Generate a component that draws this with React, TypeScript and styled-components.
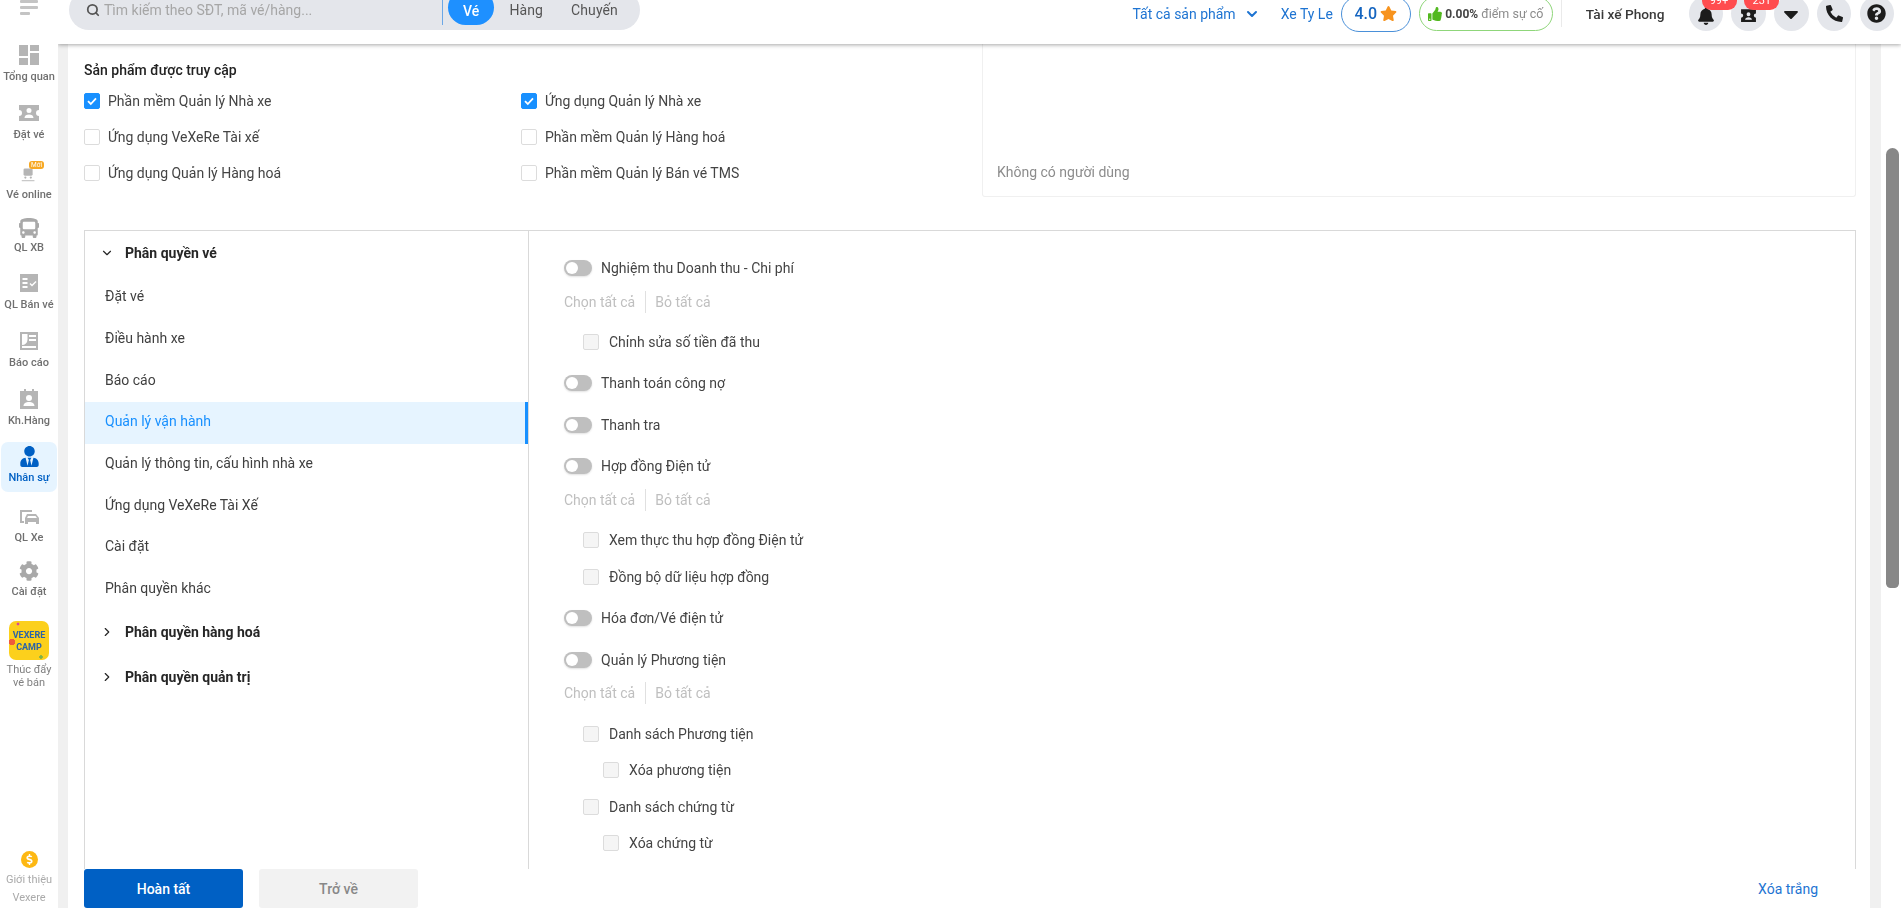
import React from "react";
import styled, { createGlobalStyle } from "styled-components";
import { FaBell, FaCaretDown, FaPhoneAlt, FaQuestionCircle, FaStar, FaThumbsUp, FaCog, FaBus, FaUserTie, FaDollarSign } from "react-icons/fa";
import { FiChevronDown, FiChevronRight, FiSearch } from "react-icons/fi";

const Global = createGlobalStyle`
  html, body { margin: 0; padding: 0; height: 100%; overflow: hidden; background: #fff; }
  body { font-family: Roboto, "Noto Sans", Arial, sans-serif; font-size: 14px; color: #3a3a3a; }
  * { box-sizing: border-box; }
`;

const Page = styled.div`
  width: 1901px; height: 908px; display: grid;
  grid-template-columns: 58px 1fr; grid-template-rows: 44px 1fr; overflow: hidden; filter: blur(0.35px);
`;

/* ---- sidebar ---- */
const Sidebar = styled.aside`
  grid-row: 1 / 3; grid-column: 1; background: #fff; z-index: 3; display: flex; flex-direction: column; align-items: center; overflow: hidden;
`;
const Burger = styled.div`
  height: 41px; width: 100%; padding-left: 20px; flex-shrink: 0; display: flex; flex-direction: column; gap: 3.5px;
  span { display: block; height: 2.5px; background: #c4c4c4; border-radius: 1px; }
  span:nth-child(1) { width: 18px; }
  span:nth-child(2) { width: 18px; }
  span:nth-child(3) { width: 10px; }
`;
const Nav = styled.div<{ $active?: boolean; $h: number; $after?: number }>`
  width: 56px; height: ${(p) => p.$h}px; margin-bottom: ${(p) => p.$after ?? 0}px; border-radius: 7px; display: flex; flex-direction: column; align-items: center; justify-content: flex-start; padding-top: 1px; flex-shrink: 0;
  background: ${(p) => (p.$active ? "#e6f4ff" : "transparent")};
  color: ${(p) => (p.$active ? "#0060c4" : "#707070")};
  font-size: 11px; font-weight: 500; line-height: 14px; white-space: nowrap; text-align: center;
  svg { display: block; flex-shrink: 0; }
`;
const NavIcon = styled.div<{ $mb?: number }>`
  height: 26px; display: flex; align-items: center; justify-content: center; position: relative; margin-bottom: ${(p) => p.$mb ?? 2}px;
`;
const NewTag = styled.span`
  position: absolute; top: 1px; left: 10px; width: 15px; height: 8px; border-radius: 3px; background: #f7a823; color: #fff; font-size: 6.5px; line-height: 8px; font-weight: 400; text-align: center;
`;
const CampLogo = styled.div`
  width: 40px; height: 39px; border-radius: 7px; color: #2b63a8; font-size: 9px; font-weight: 700; line-height: 12px; display: flex; flex-direction: column; align-items: center; justify-content: center; margin-bottom: 4px;
  background:
    radial-gradient(circle at 3px 21px, #ef5a3c 0 3px, transparent 3.5px),
    radial-gradient(circle at 9px 3px, #d8479a 0 1.2px, transparent 1.7px),
    radial-gradient(circle at 32px 36px, #7fb24a 0 1.5px, transparent 2px),
    #fcd01c;
`;
const CampLabel = styled.span`
  color: #808080; font-weight: 400; line-height: 12.5px;
`;
const Promo = styled.div`
  margin-top: auto; margin-bottom: 1px; color: #aaa; font-size: 11px; line-height: 18px; text-align: center; display: flex; flex-direction: column; align-items: center;
`;
const Coin = styled.div`
  width: 17px; height: 17px; border-radius: 50%; background: #fdb813; color: #fff; display: flex; align-items: center; justify-content: center; margin-bottom: 3px;
`;

/* ---- header ---- */
const Header = styled.header`
  grid-column: 2; grid-row: 1; height: 44px; background: #fff; box-shadow: 0 1px 4px rgba(0,0,0,.35); z-index: 2; display: flex; align-items: flex-start; padding-left: 11px;
`;
const SearchBar = styled.div`
  width: 571px; height: 40px; margin-top: -10px; border-radius: 20px; background: #e4e6eb; display: flex; align-items: flex-start; padding: 0 0 0 17px; flex-shrink: 0;
  svg { margin-top: 13px; }
`;
const SearchText = styled.span`
  color: #a6a6a6; font-size: 14px; margin: 10px 0 0 4px; line-height: 20px; width: 338px; white-space: nowrap;
`;
const SearchDivider = styled.span`
  width: 1px; height: 35px; background: #6ba7e6;
`;
const Tab = styled.span<{ $active?: boolean }>`
  height: 35px; margin-left: ${(p) => (p.$active ? "5px" : "0")}; padding: ${(p) => (p.$active ? "11px 15px 0" : "10px 13px 0 15px")};
  border-radius: 18px; display: block; line-height: 20px; letter-spacing: 0.1px;
  background: ${(p) => (p.$active ? "#1e90ff" : "transparent")}; color: ${(p) => (p.$active ? "#fff" : "#555")};
  font-weight: ${(p) => (p.$active ? 500 : 400)};
`;
const HeaderRight = styled.div`
  margin-left: auto; height: 27px; display: flex; align-items: center; padding-right: 7px; white-space: nowrap;
`;
const Blue = styled.span`
  color: #1e74d2; display: flex; align-items: center;
`;
const ProductLink = styled(Blue)`
  gap: 8px; margin-right: 21px;
`;
const RatePill = styled.div`
  height: 36px; width: 70px; margin-left: 8px; border: 1px solid #4a90d9; border-radius: 18px; color: #1565c0; font-size: 16px; font-weight: 500; display: flex; align-items: center; justify-content: center; gap: 3px; flex-shrink: 0;
`;
const IncidentPill = styled.div`
  height: 35px; width: 134px; margin-left: 8px; border: 1px solid #8fd67a; border-radius: 18px; color: #8c8c8c; font-size: 12.5px; display: flex; align-items: center; justify-content: center; gap: 3px; flex-shrink: 0;
  b { color: #444; font-weight: 700; font-size: 12px; }
`;
const HeaderDivider = styled.span`
  width: 1px; height: 27px; background: #eaeaea; margin: 0 24px 0 8px;
`;
const UserName = styled.span`
  color: #3a3a3a; font-weight: 500; font-size: 13.7px; margin-right: 15.75px;
`;
const Round = styled.div<{ $nudge?: boolean }>`
  width: 34.5px; height: 35px; margin-left: 8.25px; border-radius: 50%; background: #e4e6eb; display: flex; align-items: center; justify-content: center; color: #1c1c1c; position: relative; flex-shrink: 0;
  padding-top: ${(p) => (p.$nudge ? 4 : 0)}px;
`;
const Badge = styled.span`
  position: absolute; top: -4px; left: 13px; width: 35px; height: 18px; border-radius: 9px; background: #ff4d4f; color: #fff; font-size: 11px; line-height: 18px; text-align: center; z-index: 1;
`;

/* ---- content ---- */
const Gutter = styled.div`
  grid-column: 2; grid-row: 2; display: flex; min-height: 0; overflow: hidden;
`;
const LeftStrip = styled.div`
  width: 10px; background: #f0f0f0; flex-shrink: 0;
`;
const Main = styled.main`
  flex: 1; min-width: 0; padding: 0 14px 0 16px; display: flex; flex-direction: column; position: relative; overflow: hidden;
`;
const RightStrip = styled.div`
  width: 11px; background: #f0f0f0; flex-shrink: 0;
`;
const ScrollTrack = styled.div`
  width: 20px; flex-shrink: 0; padding: 104px 2px 0 5px; background: #fff;
`;
const ScrollThumb = styled.div`
  height: 440px; background: #878787; border-radius: 7px 7px 5px 5px;
`;
const TopRow = styled.div`
  display: flex; height: 153px; flex-shrink: 0;
`;
const Products = styled.div`
  width: 898px; padding-top: 16px;
`;
const ProductsTitle = styled.div`
  font-weight: 500; color: #222; line-height: 20px; margin-bottom: 10px;
`;
const ProductGrid = styled.div`
  display: grid; grid-template-columns: 437px 1fr; grid-auto-rows: 36.4px;
`;
const CheckRow = styled.label`
  display: flex; align-items: center; gap: 8px; height: 21px; color: #444; white-space: nowrap;
`;
const Box = styled.span<{ $checked?: boolean; $disabled?: boolean }>`
  width: 16px; height: 16px; border-radius: 2px; flex-shrink: 0; display: flex; align-items: center; justify-content: center;
  border: 1px solid ${(p) => (p.$checked ? "#1890ff" : "#dcdcdc")};
  background: ${(p) => (p.$checked ? "#1890ff" : p.$disabled ? "#f5f5f5" : "#fff")};
`;
const UsersCard = styled.div`
  flex: 1; border: 1px solid #f0f0f0; border-top: 0; border-radius: 0 0 3px 3px; color: #8c8c8c; display: flex; align-items: flex-end; padding: 0 14px 16px;
`;
const PermBox = styled.div`
  margin-top: 33px; flex: 1; min-height: 0; border: 1px solid #d9d9d9; border-bottom: 0; display: flex;
`;
const Tree = styled.div`
  width: 444px; border-right: 1px solid #d9d9d9; flex-shrink: 0; padding-top: 1px;
`;
const TreeHead = styled.div<{ $h?: number }>`
  height: ${(p) => p.$h ?? 45}px; padding: 0 0 3px 15px; display: flex; align-items: center; gap: 11px; color: #262626; font-weight: 700;
`;
const TreeItem = styled.div<{ $active?: boolean }>`
  height: 41.7px; display: flex; align-items: center; padding: 0 0 3px 20px; position: relative;
  color: ${(p) => (p.$active ? "#1890ff" : "#3f3f3f")};
  background: ${(p) => (p.$active ? "#e6f4ff" : "transparent")};
  border-right: ${(p) => (p.$active ? "3px solid #1890ff" : "0")};
`;
const Perms = styled.div`
  flex: 1; padding: 16px 0 0 35px; display: flex; flex-direction: column; align-items: flex-start;
`;
const ToggleRow = styled.div`
  height: 41.6px; display: flex; align-items: center; gap: 9px; color: #444; flex-shrink: 0;
`;
const Toggle = styled.span`
  width: 28px; height: 16px; border-radius: 8px; background: #bfbfbf; padding: 2px; flex-shrink: 0; display: flex; box-shadow: 0 1px 2px rgba(0,0,0,.12);
  &::before { content: ""; width: 12px; height: 12px; border-radius: 50%; background: #fff; }
`;
const BulkRow = styled.div`
  height: 26px; margin-bottom: 9px; display: flex; align-items: center; color: #bfbfbf; flex-shrink: 0;
`;
const BulkSep = styled.span`
  width: 1px; height: 22px; background: #e0e0e0; margin: 0 9.5px;
`;
const SubGroup = styled.div`
  display: flex; flex-direction: column; padding-bottom: 2px; flex-shrink: 0;
`;
const SubRow = styled.div<{ $level?: number }>`
  height: 36.6px; display: flex; align-items: center; gap: 10px; color: #444; flex-shrink: 0; margin-left: ${(p) => (p.$level === 2 ? 39 : 19)}px;
`;
const Footer = styled.div`
  position: absolute; left: 16px; right: 14px; bottom: 0; height: 39px; display: flex; align-items: center; background: #fff;
`;
const PrimaryBtn = styled.div`
  width: 159px; height: 39px; border-radius: 3px; background: #0060c4; color: #fff; font-weight: 500; display: flex; align-items: center; justify-content: center;
`;
const GhostBtn = styled.div`
  width: 159px; height: 39px; margin-left: 16px; border-radius: 3px; background: #f2f2f2; color: #888; font-weight: 500; display: flex; align-items: center; justify-content: center;
`;
const ClearLink = styled.span`
  margin-left: auto; margin-right: 38px; color: #1e74d2;
`;

const Check = () => (
  <svg width="12" height="12" viewBox="0 0 12 12"><path d="M2 6.2l2.8 2.8L10 3.4" fill="none" stroke="#fff" strokeWidth="1.8" /></svg>
);
const Ico = ({ children, w = 22 }: { children: React.ReactNode; w?: number }) => (
  <svg width={w} height={w} viewBox="0 0 22 22" fill="#b5b5b5">{children}</svg>
);

const products: [string, boolean][] = [
  ["Phần mềm Quản lý Nhà xe", true], ["Ứng dụng Quản lý Nhà xe", true],
  ["Ứng dụng VeXeRe Tài xế", false], ["Phần mềm Quản lý Hàng hoá", false],
  ["Ứng dụng Quản lý Hàng hoá", false], ["Phần mềm Quản lý Bán vé TMS", false],
];
const items = ["Đặt vé", "Điều hành xe", "Báo cáo", "Quản lý vận hành", "Quản lý thông tin, cấu hình nhà xe", "Ứng dụng VeXeRe Tài Xế", "Cài đặt", "Phân quyền khác"];

const Bulk = () => (
  <BulkRow>Chọn tất cả<BulkSep />Bỏ tất cả</BulkRow>
);
const Sub = ({ label, level }: { label: string; level?: number }) => (
  <SubRow $level={level}><Box $disabled />{label}</SubRow>
);
const Tog = ({ label }: { label: string }) => (
  <ToggleRow><Toggle />{label}</ToggleRow>
);

export default function App() {
  return (
    <Page>
      <Global />
      <Sidebar>
        <Burger><span /><span /><span /></Burger>
        <Nav $h={58}>
          <NavIcon><Ico><rect x="1" y="1" width="9" height="11" /><rect x="12" y="1" width="9" height="6" /><rect x="1" y="14" width="9" height="7" /><rect x="12" y="9" width="9" height="12" /></Ico></NavIcon>Tổng quan
        </Nav>
        <Nav $h={60}>
          <NavIcon><Ico><path fillRule="evenodd" d="M1 3h20v5a3 3 0 000 6v5H1v-5a3 3 0 000-6zM11 6a2.4 2.4 0 100 5 2.4 2.4 0 000-5zM6.500 16h9c0-2.400-2-3.500-4.500-3.500s-4.500 1.100-4.500 3.500z" /></Ico></NavIcon>Đặt vé
        </Nav>
        <Nav $h={55}>
          <NavIcon>
            <NewTag>Mới</NewTag>
            <Ico w={20}><rect x="5" y="6" width="10" height="8" rx="1.500" /><circle cx="7" cy="16" r="1.200" /><circle cx="13" cy="16" r="1.200" /><rect x="3" y="19" width="14" height="1" /></Ico>
          </NavIcon>Vé online
        </Nav>
        <Nav $h={55}><NavIcon $mb={0}><FaBus size={20} color="#a9a9a9" /></NavIcon>QL XB</Nav>
        <Nav $h={58}>
          <NavIcon><Ico><path fillRule="evenodd" d="M2 2h18v18H2zM4.500 6v2h5V6zM4.500 10v2h5v-2zM4.500 14v2h5v-2zM11.500 12l1-1 1.500 1.500 3.500-3.500 1 1-4.500 4.500z" /></Ico></NavIcon>QL Bán vé
        </Nav>
        <Nav $h={58}>
          <NavIcon><Ico><path fillRule="evenodd" d="M2 2h18v18H2zM4 4v11a5.500 5.500 0 005.500-5.500V4zM11 5v2h7V5zM11 9v2h7V9zM4 16v2h14v-2z" /></Ico></NavIcon>Báo cáo
        </Nav>
        <Nav $h={57}>
          <NavIcon><Ico><path fillRule="evenodd" d="M6 1h2v2h6V1h2v2h4v18H2V3h4zM11 7a3 3 0 100 6 3 3 0 000-6zM5.500 18h11c0-2.800-2.500-4-5.500-4s-5.500 1.200-5.500 4z" /></Ico></NavIcon>Kh.Hàng
        </Nav>
        <Nav $h={50} $after={10} $active><NavIcon><FaUserTie size={21} color="#0060c4" /></NavIcon>Nhân sự</Nav>
        <Nav $h={55}>
          <NavIcon><Ico><path fillRule="evenodd" d="M2 5h12v2H4v9h2v2H2zM9 9h9l3 4v6h-3v-2h-8v2H7v-6zM10 11l-1 2h10l-1.500-2z" /></Ico></NavIcon>QL Xe
        </Nav>
        <Nav $h={63}><NavIcon $mb={1}><FaCog size={20} color="#a9a9a9" /></NavIcon>Cài đặt</Nav>
        <Nav $h={76}>
          <CampLogo><span>VEXERE</span><span>CAMP</span></CampLogo>
          <CampLabel>Thúc đẩy<br />vé bán</CampLabel>
        </Nav>
        <Promo><Coin><FaDollarSign size={11} /></Coin>Giới thiệu<br />Vexere</Promo>
      </Sidebar>

      <Header>
        <SearchBar>
          <FiSearch size={14} color="#555" strokeWidth={3} />
          <SearchText>Tìm kiếm theo SĐT, mã vé/hàng...</SearchText>
          <SearchDivider />
          <Tab $active>Vé</Tab><Tab>Hàng</Tab><Tab>Chuyến</Tab>
        </SearchBar>
        <HeaderRight>
          <ProductLink>Tất cả sản phẩm <FiChevronDown size={16} strokeWidth={3} /></ProductLink>
          <Blue>Xe Ty Le</Blue>
          <RatePill>4.0 <FaStar size={17} color="#f7931e" /></RatePill>
          <IncidentPill><FaThumbsUp size={14} color="#52b81f" /><b>0.00%</b> điểm sự cố</IncidentPill>
          <HeaderDivider />
          <UserName>Tài xế Phong</UserName>
          <Round $nudge><FaBell size={18} /><Badge>99+</Badge></Round>
          <Round $nudge>
            <svg width="17" height="17" viewBox="0 0 16 16" fill="#1c1c1c"><path fillRule="evenodd" d="M1 2h14v4a2 2 0 000 4v4H1v-4a2 2 0 000-4zM8 5a1.800 1.800 0 100 3.600A1.800 1.800 0 008 5zM4.800 12h6.400c0-1.600-1.400-2.400-3.200-2.400S4.800 10.400 4.800 12z" /></svg>
            <Badge>231</Badge>
          </Round>
          <Round><FaCaretDown size={24} /></Round>
          <Round><FaPhoneAlt size={17} /></Round>
          <Round><FaQuestionCircle size={19} /></Round>
        </HeaderRight>
      </Header>

      <Gutter>
        <LeftStrip />
        <Main>
          <TopRow>
            <Products>
              <ProductsTitle>Sản phẩm được truy cập</ProductsTitle>
              <ProductGrid>
                {products.map(([t, c]) => (
                  <CheckRow key={t}><Box $checked={c}>{c && <Check />}</Box>{t}</CheckRow>
                ))}
              </ProductGrid>
            </Products>
            <UsersCard>Không có người dùng</UsersCard>
          </TopRow>
          <PermBox>
            <Tree>
              <TreeHead><FiChevronDown size={14} />Phân quyền vé</TreeHead>
              {items.map((t) => (
                <TreeItem key={t} $active={t === "Quản lý vận hành"}>{t}</TreeItem>
              ))}
              <TreeHead $h={46}><FiChevronRight size={14} />Phân quyền hàng hoá</TreeHead>
              <TreeHead $h={44}><FiChevronRight size={14} />Phân quyền quản trị</TreeHead>
            </Tree>
            <Perms>
              <Tog label="Nghiệm thu Doanh thu - Chi phí" />
              <Bulk />
              <SubGroup><Sub label="Chỉnh sửa số tiền đã thu" /></SubGroup>
              <Tog label="Thanh toán công nợ" />
              <Tog label="Thanh tra" />
              <Tog label="Hợp đồng Điện tử" />
              <Bulk />
              <SubGroup>
                <Sub label="Xem thực thu hợp đồng Điện tử" />
                <Sub label="Đồng bộ dữ liệu hợp đồng" />
              </SubGroup>
              <Tog label="Hóa đơn/Vé điện tử" />
              <Tog label="Quản lý Phương tiện" />
              <Bulk />
              <SubGroup>
                <Sub label="Danh sách Phương tiện" />
                <Sub label="Xóa phương tiện" level={2} />
                <Sub label="Danh sách chứng từ" />
                <Sub label="Xóa chứng từ" level={2} />
              </SubGroup>
            </Perms>
          </PermBox>
          <Footer>
            <PrimaryBtn>Hoàn tất</PrimaryBtn>
            <GhostBtn>Trở về</GhostBtn>
            <ClearLink>Xóa trắng</ClearLink>
          </Footer>
        </Main>
        <RightStrip />
        <ScrollTrack><ScrollThumb /></ScrollTrack>
      </Gutter>
    </Page>
  );
}
